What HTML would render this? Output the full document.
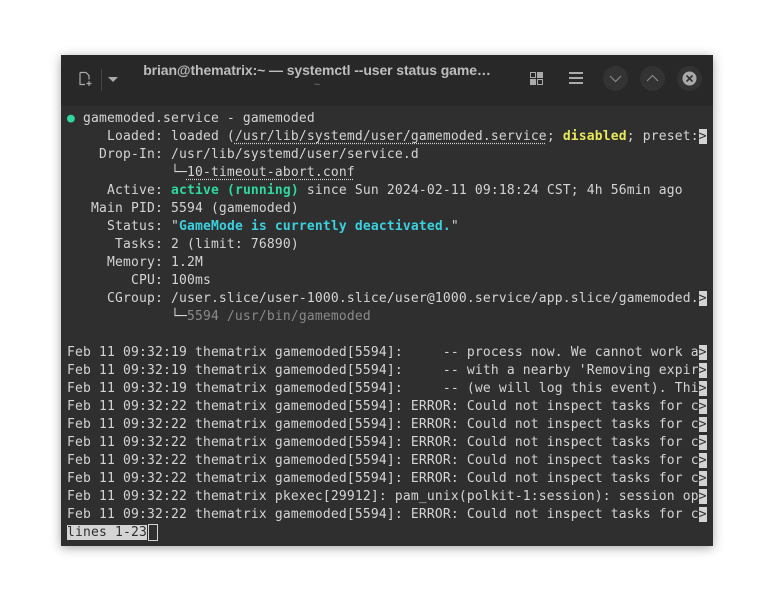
<!DOCTYPE html>
<html><head><meta charset="utf-8"><style>
body{margin:0;width:774px;height:613px;background:#fff;position:relative;overflow:hidden}
.win{position:absolute;left:61px;top:55px;width:652px;height:491px;background:#2f2f2f;box-shadow:0 2px 10px rgba(0,0,0,.35)}
.tb{position:absolute;left:0;top:0;width:652px;height:51px;background:#282828}
.title{position:absolute;left:0;width:512px;top:7px;text-align:center;font:bold 14px "Liberation Sans",sans-serif;color:#bdbdbd;letter-spacing:-.1px}
.tilde{position:absolute;left:0;width:512px;top:24px;text-align:center;font:11px "Liberation Sans",sans-serif;color:#777}
.circ{position:absolute;top:11px;width:25px;height:25px;border-radius:50%;background:#333}
pre{position:absolute;left:6px;top:55px;margin:0;font:13px/18px "DejaVu Sans Mono",monospace;letter-spacing:.17px;color:#d4d4d4}
.g{color:#2ed8a0;font-weight:bold}.y{color:#e8e85a;font-weight:bold}.c{color:#3ad0e0;font-weight:bold}
.u{text-decoration:underline dotted;text-underline-offset:3px}
.d{color:#8a8a8a}.h{background:#d4d4d4;color:#2f2f2f}
</style></head><body>
<div class="win">
<div class="tb">
<svg style="position:absolute;left:16px;top:16px" width="16" height="16" viewBox="0 0 16 16" fill="none" stroke="#aaa" stroke-width="1.2"><path d="M3 1.5h6l3 3v4M3 1.5v12h5"/><path d="M12 10v5M9.5 12.5h5"/></svg>
<div style="position:absolute;left:40px;top:14px;width:1px;height:22px;background:#444"></div>
<div style="position:absolute;left:47px;top:22px;width:0;height:0;border-left:5px solid transparent;border-right:5px solid transparent;border-top:5px solid #aaa"></div>
<div class="title">brian@thematrix:~ — systemctl --user status game…</div>
<div class="tilde">~</div>
<svg style="position:absolute;left:469px;top:17px" width="13" height="13" viewBox="0 0 13 13"><rect x=".5" y=".5" width="5" height="5" fill="none" stroke="#aaa"/><rect x="7" y="0" width="6" height="6" fill="#aaa"/><rect x="0" y="7" width="6" height="6" fill="#aaa"/><rect x="7.5" y="7.5" width="5" height="5" fill="none" stroke="#aaa"/></svg>
<svg style="position:absolute;left:508px;top:17px" width="14" height="12"><rect y="0" width="14" height="2" fill="#aaa"/><rect y="5" width="14" height="2" fill="#aaa"/><rect y="10" width="14" height="2" fill="#aaa"/></svg>
<div class="circ" style="left:542px"><svg width="25" height="25"><path d="M7 10l5.5 5.5L18 10" stroke="#888" fill="none" stroke-width="1.2"/></svg></div>
<div class="circ" style="left:579px"><svg width="25" height="25"><path d="M7 15l5.5-5.5L18 15" stroke="#888" fill="none" stroke-width="1.2"/></svg></div>
<div class="circ" style="left:616px"><svg width="25" height="25"><circle cx="12.5" cy="12.5" r="7" fill="#aaa"/><path d="M9.5 9.5l6 6M15.5 9.5l-6 6" stroke="#333" stroke-width="1.6"/></svg></div>
</div>
<pre><span class="g">●</span> gamemoded.service - gamemoded
     Loaded: loaded (<span class="u">/usr/lib/systemd/user/gamemoded.service</span>; <span class="y">disabled</span>; preset:<span class="h">&gt;</span>
    Drop-In: /usr/lib/systemd/user/service.d
             └─<span class="u">10-timeout-abort.conf</span>
     Active: <span class="g">active (running)</span> since Sun 2024-02-11 09:18:24 CST; 4h 56min ago
   Main PID: 5594 (gamemoded)
     Status: "<span class="c">GameMode is currently deactivated.</span>"
      Tasks: 2 (limit: 76890)
     Memory: 1.2M
        CPU: 100ms
     CGroup: /user.slice/user-1000.slice/user@1000.service/app.slice/gamemoded.<span class="h">&gt;</span>
             └─<span class="d">5594 /usr/bin/gamemoded</span>

Feb 11 09:32:19 thematrix gamemoded[5594]:     -- process now. We cannot work a<span class="h">&gt;</span>
Feb 11 09:32:19 thematrix gamemoded[5594]:     -- with a nearby 'Removing expir<span class="h">&gt;</span>
Feb 11 09:32:19 thematrix gamemoded[5594]:     -- (we will log this event). Thi<span class="h">&gt;</span>
Feb 11 09:32:22 thematrix gamemoded[5594]: ERROR: Could not inspect tasks for c<span class="h">&gt;</span>
Feb 11 09:32:22 thematrix gamemoded[5594]: ERROR: Could not inspect tasks for c<span class="h">&gt;</span>
Feb 11 09:32:22 thematrix gamemoded[5594]: ERROR: Could not inspect tasks for c<span class="h">&gt;</span>
Feb 11 09:32:22 thematrix gamemoded[5594]: ERROR: Could not inspect tasks for c<span class="h">&gt;</span>
Feb 11 09:32:22 thematrix gamemoded[5594]: ERROR: Could not inspect tasks for c<span class="h">&gt;</span>
Feb 11 09:32:22 thematrix pkexec[29912]: pam_unix(polkit-1:session): session op<span class="h">&gt;</span>
Feb 11 09:32:22 thematrix gamemoded[5594]: ERROR: Could not inspect tasks for c<span class="h">&gt;</span>
<span class="h">lines 1-23</span><span style="border:1px solid #d4d4d4;margin-left:1px">&nbsp;</span></pre>
</div>
</body></html>
